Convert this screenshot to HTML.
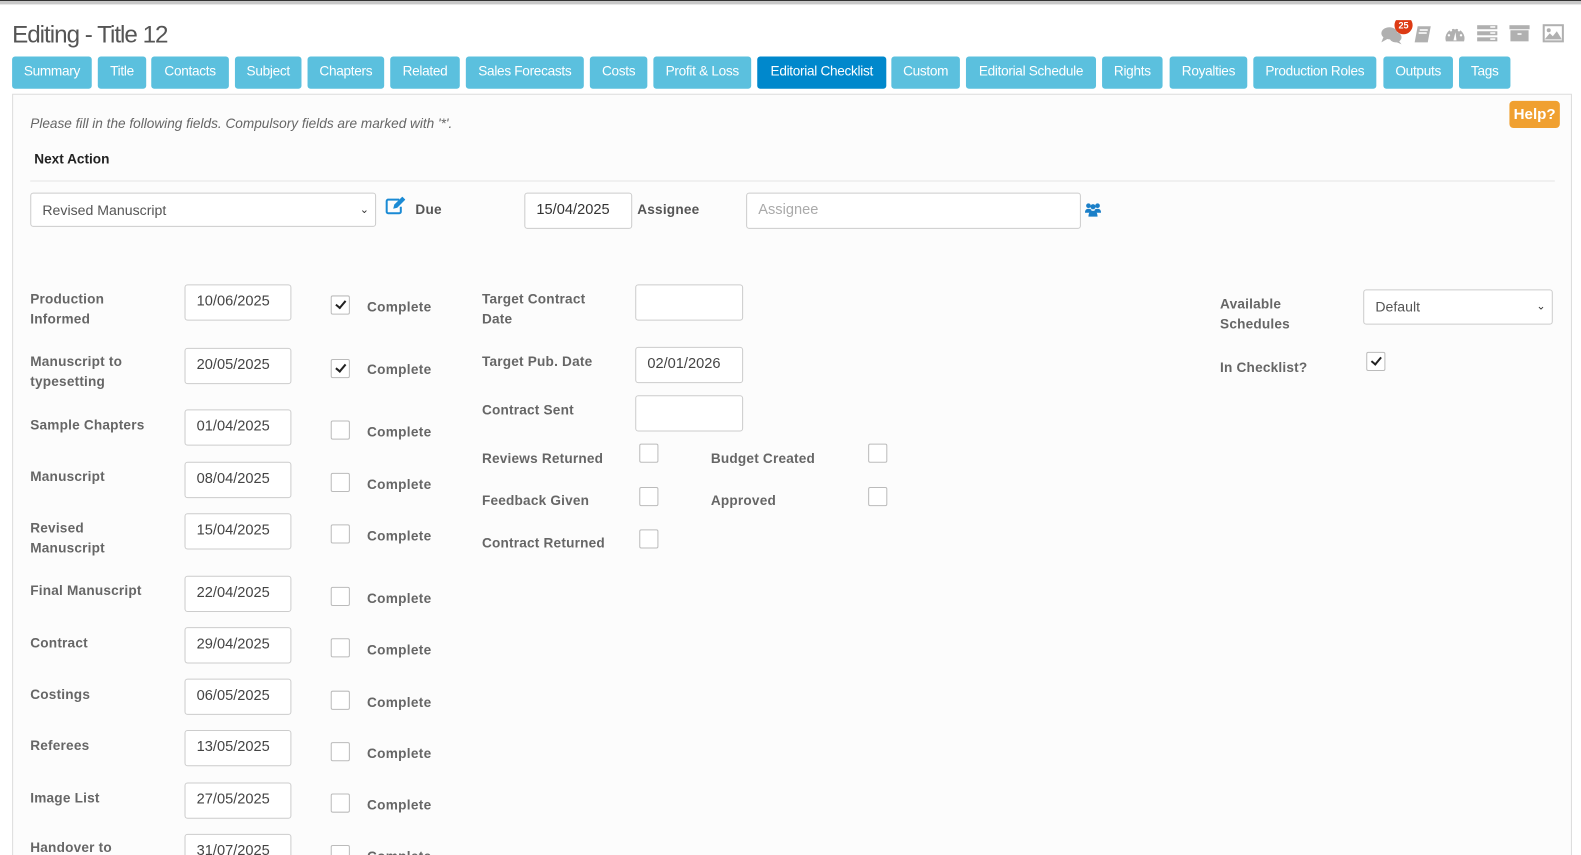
<!DOCTYPE html>
<html><head><meta charset="utf-8"><style>
html,body{margin:0;padding:0;background:#fff;width:1581px;height:855px;overflow:hidden;font-family:"Liberation Sans",Arial,sans-serif;}
#clip{position:relative;width:1581px;height:855px;overflow:hidden;}
#w{position:absolute;left:0;top:0;width:1568px;height:848px;transform:scale(1.0083);transform-origin:0 0;}
.a{position:absolute;}
.topbar{left:0;top:0;width:1568px;height:1px;background:#333;}
.topbar2{left:0;top:1px;width:1568px;height:3px;background:#c8c8c8;}
.topbar3{left:0;top:4px;width:1568px;height:1px;background:#e8e8e8;}
h1{position:absolute;left:12px;top:21px;margin:0;font-size:24px;font-weight:normal;color:#555;letter-spacing:-1px;}
.tab{position:absolute;top:56px;height:32px;line-height:30px;background:#5bc0de;color:#fff;font-size:13.5px;text-align:center;border-radius:3px;letter-spacing:-0.3px;}
.tab.on{background:#0088cc;}
.panel{left:12px;top:93px;width:1545px;height:770px;background:#fcfcfc;border:1px solid #ddd;}
.lbl{position:absolute;font-size:13.5px;font-weight:bold;color:#666;line-height:20px;letter-spacing:0.2px;}
.inp{position:absolute;height:35px;border:1px solid #ccc;border-radius:3px;background:#fff;box-sizing:border-box;font-size:14.5px;color:#444;padding-left:11px;line-height:33px;}
.cb{position:absolute;width:19px;height:19px;border:1px solid #bbb;border-radius:2px;background:#fff;box-sizing:border-box;}
.cb.k::after{content:"";position:absolute;left:6px;top:2px;width:4px;height:8px;border:solid #222;border-width:0 2px 2px 0;transform:rotate(40deg);}
.cmp{position:absolute;font-size:13.5px;font-weight:bold;color:#666;letter-spacing:0.3px;}
</style></head><body><div id="clip"><div id="w">
<div class="a topbar"></div><div class="a topbar2"></div><div class="a topbar3"></div>
<h1>Editing - Title 12</h1>

<svg class="a" style="left:1368px;top:20px" width="190" height="26" viewBox="0 0 190 26">
 <g fill="#b0b0b0">
  <ellipse cx="10" cy="13" rx="8" ry="6"/><path d="M4 17 L2 22 L9 18Z"/>
  <ellipse cx="16" cy="17" rx="6" ry="5"/><path d="M19 20 L22 24 L15 21Z"/>
  <path d="M38 6 h13 l-3 16 h-13 z"/>
  <path d="M66 21 a9.5 9.5 0 1 1 18 0 z"/>
  <rect x="97" y="5" width="20" height="4"/><rect x="97" y="11" width="20" height="4"/><rect x="97" y="17" width="20" height="4"/>
  <rect x="129" y="5" width="20" height="4"/><rect x="130" y="10" width="18" height="11"/>
  <rect x="162" y="4" width="21" height="18"/>
 </g>
 <g fill="#fff">
  <rect x="40" y="9" width="8" height="1.5"/><rect x="39" y="12" width="8" height="1.5"/>
  <circle cx="69" cy="15" r="1.2"/><circle cx="71" cy="10" r="1.2"/><circle cx="75" cy="8" r="1.2"/><circle cx="79" cy="10" r="1.2"/><circle cx="81" cy="15" r="1.2"/>
  <path d="M73.5 20 l2-8 1 8z"/>
  <rect x="110" y="6" width="5" height="1.5"/><rect x="110" y="12" width="5" height="1.5"/><rect x="110" y="18" width="5" height="1.5"/>
  <rect x="137" y="13" width="4" height="1.5"/>
  <rect x="164" y="6" width="17" height="14"/>
 </g>
 <path d="M164 19 l5-6 3 3 4-5 5 8z" fill="#b0b0b0"/><circle cx="168" cy="10" r="2" fill="#b0b0b0"/>
 <circle cx="24" cy="5" r="9" fill="#dd3a14"/>
 <text x="24" y="8.5" font-family="Liberation Sans" font-size="9" font-weight="bold" fill="#fff" text-anchor="middle">25</text>
</svg>

<div class="tab" style="left:12px;width:79px">Summary</div>
<div class="tab" style="left:97px;width:48px">Title</div>
<div class="tab" style="left:150px;width:77px">Contacts</div>
<div class="tab" style="left:233px;width:66px">Subject</div>
<div class="tab" style="left:305px;width:76px">Chapters</div>
<div class="tab" style="left:387px;width:69px">Related</div>
<div class="tab" style="left:462px;width:117px">Sales Forecasts</div>
<div class="tab" style="left:585px;width:57px">Costs</div>
<div class="tab" style="left:648px;width:97px">Profit &amp; Loss</div>
<div class="tab on" style="left:751px;width:128px">Editorial Checklist</div>
<div class="tab" style="left:884px;width:68px">Custom</div>
<div class="tab" style="left:958px;width:129px">Editorial Schedule</div>
<div class="tab" style="left:1093px;width:60px">Rights</div>
<div class="tab" style="left:1160px;width:77px">Royalties</div>
<div class="tab" style="left:1243px;width:122px">Production Roles</div>
<div class="tab" style="left:1372px;width:69px">Outputs</div>
<div class="tab" style="left:1447px;width:51px">Tags</div>

<div class="a panel"></div>
<div class="a" style="left:30px;top:115px;font-size:13.5px;font-style:italic;color:#666">Please fill in the following fields. Compulsory fields are marked with '*'.</div>
<div class="a" style="left:1497px;top:100px;width:50px;height:27px;background:#f0a030;border-radius:4px;color:#fff;font-weight:bold;font-size:15px;line-height:27px;text-align:center">Help?</div>
<div class="a" style="left:34px;top:150px;font-size:13.5px;font-weight:bold;color:#222">Next Action</div>
<div class="a" style="left:30px;top:179px;width:1512px;height:1px;background:#e3e3e3"></div>

<div class="inp" style="left:30px;top:191px;width:343px;height:34px;color:#555;font-size:14px">Revised Manuscript<span style="position:absolute;right:6px;top:0;font-size:11px;color:#333">&#8964;</span></div>
<svg class="a" style="left:382px;top:195px" width="20" height="18" viewBox="0 0 20 18"><path d="M14 3 H3 a1.5 1.5 0 0 0-1.5 1.5 V15 a1.5 1.5 0 0 0 1.5 1.5 H14 a1.5 1.5 0 0 0 1.5-1.5 V10" fill="none" stroke="#1a8ad4" stroke-width="2"/><path d="M8 12 l1-4 8-8 3 3-8 8z" fill="#1a8ad4"/></svg>
<div class="lbl" style="left:412px;top:198px;color:#555">Due</div>
<div class="inp" style="left:520px;top:191px;width:107px;height:36px;color:#333">15/04/2025</div>
<div class="lbl" style="left:632px;top:198px;color:#555">Assignee</div>
<div class="inp" style="left:740px;top:191px;width:332px;height:36px;color:#aaa">Assignee</div>
<svg class="a" style="left:1076px;top:201px" width="16" height="14" viewBox="0 0 16 14"><g fill="#1a7fc8"><circle cx="3.5" cy="3" r="2.3"/><circle cx="12.5" cy="3" r="2.3"/><circle cx="8" cy="4" r="2.6"/><path d="M0 10 q0-4 3.5-4 q2 0 3 1 v3z"/><path d="M16 10 q0-4-3.5-4 q-2 0-3 1 v3z"/><path d="M3.5 14 q0-6 4.5-6 q4.5 0 4.5 6z"/></g></svg>

<div class="lbl" style="left:30px;top:287px">Production<br>Informed</div>
<div class="inp" style="left:183px;top:282px;width:106px;height:36px">10/06/2025</div>
<div class="cb k" style="left:328px;top:293px"></div><div class="cmp" style="left:364px;top:297px">Complete</div>

<div class="lbl" style="left:30px;top:349px">Manuscript to<br>typesetting</div>
<div class="inp" style="left:183px;top:345px;width:106px;height:36px">20/05/2025</div>
<div class="cb k" style="left:328px;top:356px"></div><div class="cmp" style="left:364px;top:359px">Complete</div>

<div class="lbl" style="left:30px;top:412px">Sample Chapters</div>
<div class="inp" style="left:183px;top:406px;width:106px;height:36px">01/04/2025</div>
<div class="cb" style="left:328px;top:417px"></div><div class="cmp" style="left:364px;top:421px">Complete</div>

<div class="lbl" style="left:30px;top:463px">Manuscript</div>
<div class="inp" style="left:183px;top:458px;width:106px;height:36px">08/04/2025</div>
<div class="cb" style="left:328px;top:469px"></div><div class="cmp" style="left:364px;top:473px">Complete</div>

<div class="lbl" style="left:30px;top:514px">Revised<br>Manuscript</div>
<div class="inp" style="left:183px;top:509px;width:106px;height:36px">15/04/2025</div>
<div class="cb" style="left:328px;top:520px"></div><div class="cmp" style="left:364px;top:524px">Complete</div>

<div class="lbl" style="left:30px;top:576px">Final Manuscript</div>
<div class="inp" style="left:183px;top:571px;width:106px;height:36px">22/04/2025</div>
<div class="cb" style="left:328px;top:582px"></div><div class="cmp" style="left:364px;top:586px">Complete</div>

<div class="lbl" style="left:30px;top:628px">Contract</div>
<div class="inp" style="left:183px;top:622px;width:106px;height:36px">29/04/2025</div>
<div class="cb" style="left:328px;top:633px"></div><div class="cmp" style="left:364px;top:637px">Complete</div>

<div class="lbl" style="left:30px;top:679px">Costings</div>
<div class="inp" style="left:183px;top:673px;width:106px;height:36px">06/05/2025</div>
<div class="cb" style="left:328px;top:685px"></div><div class="cmp" style="left:364px;top:689px">Complete</div>

<div class="lbl" style="left:30px;top:730px">Referees</div>
<div class="inp" style="left:183px;top:724px;width:106px;height:36px">13/05/2025</div>
<div class="cb" style="left:328px;top:736px"></div><div class="cmp" style="left:364px;top:740px">Complete</div>

<div class="lbl" style="left:30px;top:782px">Image List</div>
<div class="inp" style="left:183px;top:776px;width:106px;height:36px">27/05/2025</div>
<div class="cb" style="left:328px;top:787px"></div><div class="cmp" style="left:364px;top:791px">Complete</div>

<div class="lbl" style="left:30px;top:831px">Handover to</div>
<div class="inp" style="left:183px;top:827px;width:106px;height:36px">31/07/2025</div>
<div class="cb" style="left:328px;top:838px"></div><div class="cmp" style="left:364px;top:842px">Complete</div>

<div class="lbl" style="left:478px;top:287px">Target Contract<br>Date</div>
<div class="inp" style="left:630px;top:282px;width:107px;height:36px"></div>
<div class="lbl" style="left:478px;top:349px">Target Pub. Date</div>
<div class="inp" style="left:630px;top:344px;width:107px;height:36px">02/01/2026</div>
<div class="lbl" style="left:478px;top:397px">Contract Sent</div>
<div class="inp" style="left:630px;top:392px;width:107px;height:36px"></div>
<div class="lbl" style="left:478px;top:445px">Reviews Returned</div>
<div class="cb" style="left:634px;top:440px"></div>
<div class="lbl" style="left:705px;top:445px">Budget Created</div>
<div class="cb" style="left:861px;top:440px"></div>
<div class="lbl" style="left:478px;top:487px">Feedback Given</div>
<div class="cb" style="left:634px;top:483px"></div>
<div class="lbl" style="left:705px;top:487px">Approved</div>
<div class="cb" style="left:861px;top:483px"></div>
<div class="lbl" style="left:478px;top:529px">Contract Returned</div>
<div class="cb" style="left:634px;top:525px"></div>

<div class="lbl" style="left:1210px;top:292px">Available<br>Schedules</div>
<div class="inp" style="left:1352px;top:287px;width:188px;height:35px;color:#555;font-size:14px">Default<span style="position:absolute;right:6px;top:0;font-size:11px;color:#333">&#8964;</span></div>
<div class="lbl" style="left:1210px;top:355px">In Checklist?</div>
<div class="cb k" style="left:1355px;top:349px"></div>
</div></div></body></html>
